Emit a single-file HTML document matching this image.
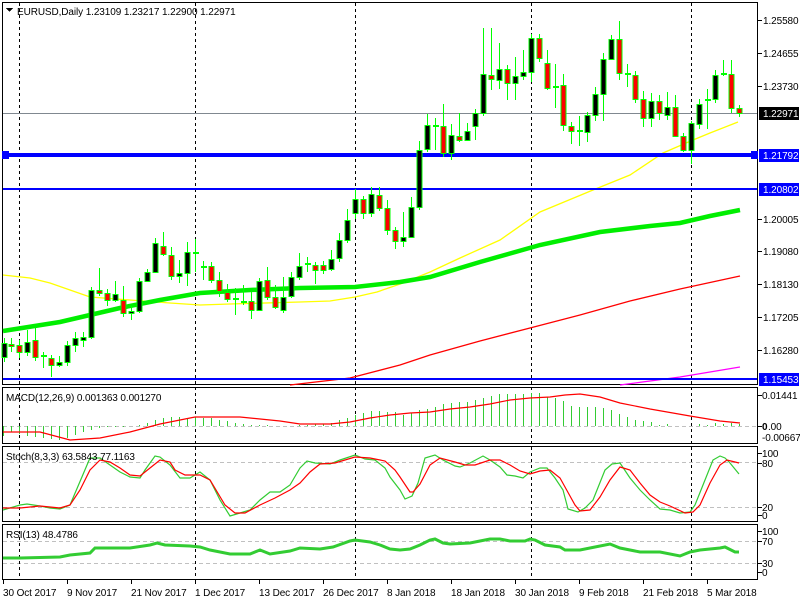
<!DOCTYPE html>
<html><head><meta charset="utf-8"><style>
html,body{margin:0;padding:0;background:#fff;width:800px;height:600px;overflow:hidden}
svg{display:block}
text{font-family:"Liberation Sans",sans-serif;font-size:10px;letter-spacing:-0.1px;fill:#000}
</style></head><body>
<svg width="800" height="600" viewBox="0 0 800 600" xmlns="http://www.w3.org/2000/svg" shape-rendering="crispEdges">
<rect width="800" height="600" fill="#fff"/>
<g fill="none" stroke="#000" stroke-width="1">
<rect x="2.5" y="2.5" width="755" height="382"/>
<rect x="2.5" y="387.5" width="755" height="56"/>
<rect x="2.5" y="446.5" width="755" height="75"/>
<rect x="2.5" y="524.5" width="755" height="55"/>
</g>
<g stroke="#c0c0c0" stroke-dasharray="4,3">
<line x1="3" y1="426.5" x2="757" y2="426.5"/>
<line x1="3" y1="462.5" x2="757" y2="462.5"/>
<line x1="3" y1="507.5" x2="757" y2="507.5"/>
<line x1="3" y1="541.5" x2="757" y2="541.5"/>
<line x1="3" y1="563.5" x2="757" y2="563.5"/>
</g>
<g stroke="#000" stroke-dasharray="3,3">
<line x1="19.5" y1="3" x2="19.5" y2="580"/>
<line x1="195.5" y1="3" x2="195.5" y2="580"/>
<line x1="355.5" y1="3" x2="355.5" y2="580"/>
<line x1="531.5" y1="3" x2="531.5" y2="580"/>
<line x1="691.5" y1="3" x2="691.5" y2="580"/>
</g>
<line x1="3" y1="113.5" x2="757" y2="113.5" stroke="#808890"/>
<g fill="none" shape-rendering="auto">
<polyline stroke="#ffff00" stroke-width="1.3" points="3,275 30,278 50,283 70,290 90,297 130,300 170,303 200,305 230,304 300,302 330,301 355,297 377,292 403,283 430,272 460,258 500,240 540,212 593,190 630,175 663,153 693,140 710,133 738,122"/>
<polyline stroke="#00ee00" stroke-width="4.5" points="3,331 60,322 120,308 160,300 200,293 250,290 300,288 355,287 400,282 430,277 480,262 540,245 600,232 650,226 680,223 710,216 740,210"/>
<polyline stroke="#ff0000" stroke-width="1.3" points="290,385 350,378 400,365 430,355 480,341 530,328 580,315 630,301 680,289 740,276"/>
<polyline stroke="#ff00ff" stroke-width="1.3" points="620,385 680,377 740,367"/>
</g>
<rect x="3" y="153" width="754" height="4" fill="#0000ff"/>
<rect x="2" y="151" width="7" height="8" fill="#0000ff"/>
<rect x="751" y="151" width="7" height="8" fill="#0000ff"/>
<rect x="3" y="188" width="754" height="2" fill="#0000ff"/>
<rect x="3" y="378" width="754" height="2" fill="#0000ff"/>
<g stroke="#00ff00" stroke-width="1">
<path d="M4.5 338V362M11.5 338V352M19.5 340V358M27.5 330V356M35.5 328V361M43.5 352V368M51.5 355V377M59.5 356V367M67.5 341V366M75.5 332V352M83.5 332V347M91.5 287V339M99.5 268V296M107.5 289V306M115.5 281V302M123.5 286V317M131.5 306V320M139.5 278V313M147.5 269V281M155.5 238V273M163.5 232V256M171.5 247V280M179.5 260V283M187.5 242V286M195.5 239V272M203.5 261V280M211.5 262V283M219.5 272V297M227.5 284V302M235.5 288V315M243.5 285V305M251.5 292V319M259.5 278V311M267.5 267V300M275.5 285V309M283.5 277V313M291.5 272V298M299.5 253V280M307.5 257V272M315.5 262V284M323.5 261V274M331.5 250V271M339.5 233V262M347.5 209V243M355.5 189V219M363.5 196V219M371.5 187V217M379.5 187V211M387.5 200V235M395.5 227V249M403.5 212V247M411.5 197V238M419.5 141V210M427.5 114V152M435.5 118V150M443.5 104V157M451.5 124V160M459.5 113V142M467.5 123V140M475.5 109V140M483.5 28V116M491.5 28V90M499.5 43V89M507.5 65V100M515.5 57V100M523.5 50V80M531.5 34V82M539.5 34V62M547.5 50V90M555.5 64V108M563.5 74V131M571.5 122V144M579.5 116V146M587.5 112V142M595.5 87V121M603.5 53V121M611.5 35V60M619.5 21V80M627.5 64V87M635.5 71V103M643.5 91V127M651.5 93V127M659.5 95V120M667.5 92V120M675.5 95V136M683.5 133V152M691.5 121V164M699.5 99V129M707.5 89V129M715.5 70V103M723.5 60V76M731.5 60V113M739.5 105V117"/>
<path stroke-width="2" d="M41 356H47M193 253H199M201 267H207M233 299H239M241 302H247M305 264H311M433 126H439M553 87H559M577 131H583M625 74H631M705 100H711M721 74H727"/>
<g fill="#000">
<rect x="2" y="343.5" width="5" height="14"/><rect x="25" y="342.5" width="5" height="10"/><rect x="57" y="362.5" width="5" height="3"/><rect x="65" y="345.5" width="5" height="17"/><rect x="73" y="338.5" width="5" height="7"/><rect x="81" y="337.5" width="5" height="3"/><rect x="89" y="290.5" width="5" height="47"/><rect x="113" y="294.5" width="5" height="6"/><rect x="129" y="311.5" width="5" height="2"/><rect x="137" y="281.5" width="5" height="30"/><rect x="145" y="272.5" width="5" height="9"/><rect x="153" y="243.5" width="5" height="29"/><rect x="177" y="273.5" width="5" height="3"/><rect x="185" y="252.5" width="5" height="21"/><rect x="257" y="281.5" width="5" height="29"/><rect x="281" y="297.5" width="5" height="13"/><rect x="289" y="277.5" width="5" height="19"/><rect x="297" y="266.5" width="5" height="11"/><rect x="329" y="259.5" width="5" height="10"/><rect x="337" y="240.5" width="5" height="18"/><rect x="345" y="220.5" width="5" height="20"/><rect x="353" y="199.5" width="5" height="14"/><rect x="369" y="194.5" width="5" height="19"/><rect x="401" y="237.5" width="5" height="4"/><rect x="409" y="207.5" width="5" height="30"/><rect x="417" y="150.5" width="5" height="57"/><rect x="425" y="125.5" width="5" height="24"/><rect x="449" y="135.5" width="5" height="18"/><rect x="465" y="131.5" width="5" height="9"/><rect x="473" y="113.5" width="5" height="13"/><rect x="481" y="74.5" width="5" height="39"/><rect x="497" y="69.5" width="5" height="11"/><rect x="513" y="76.5" width="5" height="7"/><rect x="521" y="72.5" width="5" height="4"/><rect x="529" y="38.5" width="5" height="34"/><rect x="585" y="115.5" width="5" height="17"/><rect x="593" y="94.5" width="5" height="21"/><rect x="601" y="59.5" width="5" height="35"/><rect x="609" y="39.5" width="5" height="20"/><rect x="649" y="101.5" width="5" height="17"/><rect x="665" y="107.5" width="5" height="8"/><rect x="689" y="123.5" width="5" height="27"/><rect x="697" y="104.5" width="5" height="20"/><rect x="713" y="75.5" width="5" height="24"/>
</g>
<g fill="#ff0000">
<rect x="9" y="344.5" width="5" height="2"/><rect x="17" y="345.5" width="5" height="7"/><rect x="33" y="340.5" width="5" height="17"/><rect x="49" y="358.5" width="5" height="7"/><rect x="97" y="290.5" width="5" height="3"/><rect x="105" y="293.5" width="5" height="7"/><rect x="121" y="300.5" width="5" height="13"/><rect x="161" y="246.5" width="5" height="8"/><rect x="169" y="255.5" width="5" height="21"/><rect x="209" y="266.5" width="5" height="14"/><rect x="217" y="280.5" width="5" height="11"/><rect x="225" y="292.5" width="5" height="7"/><rect x="249" y="301.5" width="5" height="9"/><rect x="265" y="280.5" width="5" height="17"/><rect x="273" y="297.5" width="5" height="10"/><rect x="313" y="265.5" width="5" height="5"/><rect x="321" y="265.5" width="5" height="5"/><rect x="361" y="199.5" width="5" height="14"/><rect x="377" y="195.5" width="5" height="13"/><rect x="385" y="208.5" width="5" height="22"/><rect x="393" y="230.5" width="5" height="11"/><rect x="441" y="126.5" width="5" height="27"/><rect x="457" y="136.5" width="5" height="4"/><rect x="489" y="75.5" width="5" height="4"/><rect x="505" y="69.5" width="5" height="14"/><rect x="537" y="38.5" width="5" height="20"/><rect x="545" y="63.5" width="5" height="25"/><rect x="561" y="85.5" width="5" height="40"/><rect x="569" y="126.5" width="5" height="5"/><rect x="617" y="39.5" width="5" height="34"/><rect x="633" y="75.5" width="5" height="24"/><rect x="641" y="99.5" width="5" height="19"/><rect x="657" y="101.5" width="5" height="12"/><rect x="673" y="107.5" width="5" height="29"/><rect x="681" y="136.5" width="5" height="14"/><rect x="729" y="74.5" width="5" height="34"/><rect x="737" y="108.5" width="5" height="5"/>
</g>
</g>
<path stroke="#33cc33" stroke-width="1" d="M3.5 426V436M11.5 426V432M19.5 426V434M27.5 426V436M35.5 426V437M43.5 426V438M51.5 426V439M59.5 426V440M67.5 426V438M75.5 426V435M83.5 426V432M91.5 426V430M99.5 426V428M107.5 426V427M115.5 426V427M123.5 426V427M139.5 426V425M147.5 426V423M155.5 426V420M163.5 426V418M171.5 426V417M179.5 426V417M187.5 426V418M195.5 426V417M203.5 426V418M211.5 426V418M219.5 426V420M227.5 426V421M235.5 426V423M243.5 426V424M251.5 426V425M259.5 426V425M267.5 426V425M299.5 426V425M307.5 426V425M315.5 426V424M323.5 426V424M331.5 426V423M339.5 426V420M347.5 426V418M355.5 426V415M363.5 426V413M371.5 426V411M379.5 426V411M387.5 426V412M395.5 426V412M403.5 426V415M411.5 426V413M419.5 426V410M427.5 426V409M435.5 426V407M443.5 426V404M451.5 426V403M459.5 426V402M467.5 426V402M475.5 426V400M483.5 426V398M491.5 426V396M499.5 426V394M507.5 426V394M515.5 426V394M523.5 426V394M531.5 426V393M539.5 426V393M547.5 426V397M555.5 426V398M563.5 426V401M571.5 426V406M579.5 426V407M587.5 426V407M595.5 426V407M603.5 426V408M611.5 426V410M619.5 426V414M627.5 426V417M635.5 426V420M643.5 426V421M651.5 426V422M659.5 426V425M667.5 426V424M699.5 426V424M707.5 426V425M715.5 426V423M723.5 426V424M731.5 426V423M739.5 426V424"/>
<g fill="none" stroke-width="1.2" shape-rendering="auto">
<polyline stroke="#ff0000" points="3,432 40,432 70,440 100,438 130,432 160,424 195,417 240,417 280,421 300,424 330,424 350,422 370,418 390,415 410,413 430,412 450,409 470,407 490,404 510,400 530,398 550,397 565,395 580,394 600,397 620,403 650,409 690,416 720,421 740,423"/>
<polyline stroke="#33cc33" points="3,510 20,505 27,504 40,506 50,508 60,509 70,505 90,458 100,458 110,465 120,472 130,477 140,478 145,470 155,456 160,457 170,465 180,478 190,478 200,472 210,480 220,500 230,516 240,513 250,510 260,500 270,492 280,492 290,485 300,468 307,461 315,463 330,464 340,460 355,455 365,459 375,460 385,468 390,477 400,490 405,499 412,496 418,483 425,458 435,455 443,460 455,466 460,467 470,463 483,456 490,460 500,467 507,475 515,476 523,478 530,472 540,468 547,468 555,478 563,490 568,509 578,512 585,508 593,500 605,470 612,464 620,463 630,478 640,490 650,500 660,509 670,510 680,513 690,512 695,505 705,480 713,460 720,456 725,458 730,463 739,474"/>
<polyline stroke="#ff0000" points="3,508 20,508 40,506 60,508 70,505 80,490 90,470 100,460 110,462 120,468 130,475 140,476 150,468 160,460 170,462 175,470 185,475 200,475 210,480 225,505 235,513 245,513 260,505 275,498 290,490 300,483 310,472 320,464 335,463 355,457 370,458 385,461 395,470 400,477 410,492 413,492 420,484 430,465 440,458 455,462 465,465 475,465 490,460 500,460 510,465 520,471 530,474 540,471 550,470 560,478 565,487 575,505 580,511 590,510 600,497 610,480 620,467 630,470 640,483 650,495 660,502 670,506 685,513 693,512 700,505 710,483 720,465 727,460 735,462 739,463"/>
</g>
<polyline fill="none" stroke="#33cc33" stroke-width="3" shape-rendering="auto" points="3,558 20,558 60,557 70,555 90,553 95,548 130,548 150,545 157,543 165,545 190,546 200,547 210,550 230,554 250,554 260,550 270,554 290,551 300,548 320,549 333,547 350,541 355,540 370,542 380,545 390,549 400,550 410,549 420,545 430,540 435,539 443,543 450,544 470,543 480,541 490,539 500,539 510,541 525,541 530,539 535,540 545,545 560,547 565,550 580,550 595,547 610,544 620,548 640,552 660,552 680,556 690,552 700,550 720,548 725,547 735,552 739,552"/>
<path stroke="#000" d="M758 20.5H762M758 53.5H762M758 86.5H762M758 219.5H762M758 251.5H762M758 284.5H762M758 317.5H762M758 350.5H762M758 395.5H762M758 426.5H762M758 453.5H762M758 463.5H762M758 507.5H762M758 515.5H762M758 531.5H762M758 541.5H762M758 563.5H762M758 572.5H762M3.5 580V584M67.5 580V584M131.5 580V584M195.5 580V584M259.5 580V584M323.5 580V584M387.5 580V584M451.5 580V584M515.5 580V584M579.5 580V584M643.5 580V584M707.5 580V584"/>
<g>
<text x="763" y="24">1.25580</text>
<text x="763" y="57">1.24655</text>
<text x="763" y="90">1.23730</text>
<text x="763" y="223">1.20005</text>
<text x="763" y="255">1.19080</text>
<text x="763" y="288">1.18130</text>
<text x="763" y="321">1.17205</text>
<text x="763" y="354">1.16280</text>
<rect x="759" y="107" width="40" height="13" fill="#000"/><text x="763" y="117" style="fill:#fff">1.22971</text>
<rect x="759" y="149" width="40" height="13" fill="#0000ff"/><text x="763" y="159" style="fill:#fff">1.21792</text>
<rect x="759" y="183" width="40" height="13" fill="#0000ff"/><text x="763" y="193" style="fill:#fff">1.20802</text>
<rect x="759" y="373" width="40" height="13" fill="#0000ff"/><text x="763" y="383" style="fill:#fff">1.15453</text>
<text x="762" y="399">0.01441</text>
<text x="762" y="430" style="font-weight:bold">0</text><text x="768" y="430">.00</text>
<text x="762" y="441">-0.006677</text>
<text x="762" y="457">100</text>
<text x="762" y="467">80</text>
<text x="762" y="511">20</text>
<text x="762" y="519">0</text>
<text x="762" y="535">100</text>
<text x="762" y="545">70</text>
<text x="762" y="567">30</text>
<text x="762" y="576">0</text>
</g>
<path d="M6 8H13L9.5 12Z" fill="#000"/>
<text x="17" y="15">EURUSD,Daily  1.23109 1.23217 1.22900 1.22971</text>
<text x="6" y="401">MACD(12,26,9) 0.001363 0.001270</text>
<text x="6" y="460">Stoch(8,3,3) 63.5843 77.1163</text>
<text x="6" y="538">RSI(13) 48.4786</text>
<g>
<text x="3" y="596">30 Oct 2017</text>
<text x="67" y="596">9 Nov 2017</text>
<text x="131" y="596">21 Nov 2017</text>
<text x="195" y="596">1 Dec 2017</text>
<text x="259" y="596">13 Dec 2017</text>
<text x="323" y="596">26 Dec 2017</text>
<text x="387" y="596">8 Jan 2018</text>
<text x="451" y="596">18 Jan 2018</text>
<text x="515" y="596">30 Jan 2018</text>
<text x="579" y="596">9 Feb 2018</text>
<text x="643" y="596">21 Feb 2018</text>
<text x="707" y="596">5 Mar 2018</text>
</g>
</svg>
</body></html>
